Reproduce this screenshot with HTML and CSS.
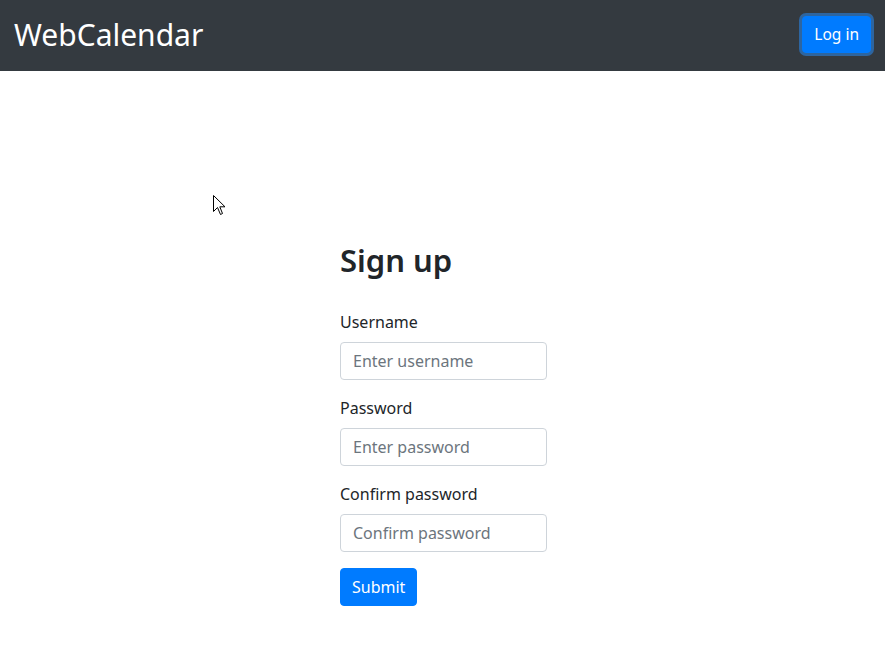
FILE: index.html
```html
<!DOCTYPE html>
<html lang="en">
<head>
<meta charset="utf-8">
<title>WebCalendar</title>
<link rel="stylesheet" href="styles.css">
</head>
<body>
<nav class="navbar">
  <a class="brand" href="#">WebCalendar</a>
  <button class="btn btn-primary btn-focus" type="button">Log in</button>
</nav>
<main class="main">
  <form class="signup">
    <h2 class="title">Sign up</h2>
    <div class="form-group">
      <label class="label" for="username">Username</label>
      <input class="input" id="username" type="text" placeholder="Enter username">
    </div>
    <div class="form-group">
      <label class="label" for="password">Password</label>
      <input class="input" id="password" type="password" placeholder="Enter password">
    </div>
    <div class="form-group">
      <label class="label" for="confirm">Confirm password</label>
      <input class="input" id="confirm" type="password" placeholder="Confirm password">
    </div>
    <button class="btn btn-primary btn-submit" type="submit">Submit</button>
  </form>
</main>
<svg class="cursor" width="13" height="21" viewBox="0 0 13 21" aria-hidden="true">
  <path d="M0.5 0.5 L0.5 16.5 L4.5 12.5 L7.5 19.5 L9.5 18.5 L6.8 11.8 L12 11.8 Z" fill="#fff" stroke="#000" stroke-width="1" stroke-linejoin="miter"/>
</svg>
</body>
</html>
```

FILE: styles.css
```css
* { box-sizing: border-box; }

html, body {
  margin: 0;
  padding: 0;
}

body {
  font-family: "Noto Sans", "Open Sans", sans-serif;
  font-size: 16px;
  line-height: 1.5;
  color: #212529;
  background: #fff;
  width: 885px;
  height: 662px;
  overflow: hidden;
  position: relative;
}

.navbar {
  height: 71px;
  background: #343a40;
  display: flex;
  align-items: center;
  justify-content: space-between;
  padding: 0 14px 2px 14px;
}

.brand {
  color: #fff;
  text-decoration: none;
  font-size: 30px;
  line-height: 1.2;
}

.btn {
  display: inline-block;
  font-family: inherit;
  font-size: 16px;
  line-height: 1.5;
  padding: 6px 12px;
  border: 1px solid transparent;
  border-radius: 4px;
  cursor: pointer;
}

.btn-primary {
  background: #007bff;
  border-color: #007bff;
  color: #fff;
}

.btn-focus {
  font-size: 15.5px;
  padding: 6px 11px;
  box-shadow: 0 0 0 3px rgba(38, 143, 255, 0.5);
}

.btn-submit {
  padding: 6px 11px;
}

.main {
  padding: 170px 0 0 340px;
}

.signup {
  width: 207px;
}

.title {
  margin: 0 0 31px 0;
  font-size: 31px;
  font-weight: 600;
  line-height: 1.24;
}

.form-group {
  margin-bottom: 16px;
}

.label {
  display: block;
  margin-bottom: 8px;
}

.input {
  display: block;
  width: 207px;
  height: 38px;
  padding: 6px 12px;
  font-family: inherit;
  font-size: 16px;
  line-height: 1.5;
  color: #495057;
  background: #fff;
  border: 1px solid #ced4da;
  border-radius: 4px;
}

.input::placeholder {
  color: #6c757d;
  opacity: 1;
}

.cursor {
  position: absolute;
  left: 213px;
  top: 195px;
}
```
